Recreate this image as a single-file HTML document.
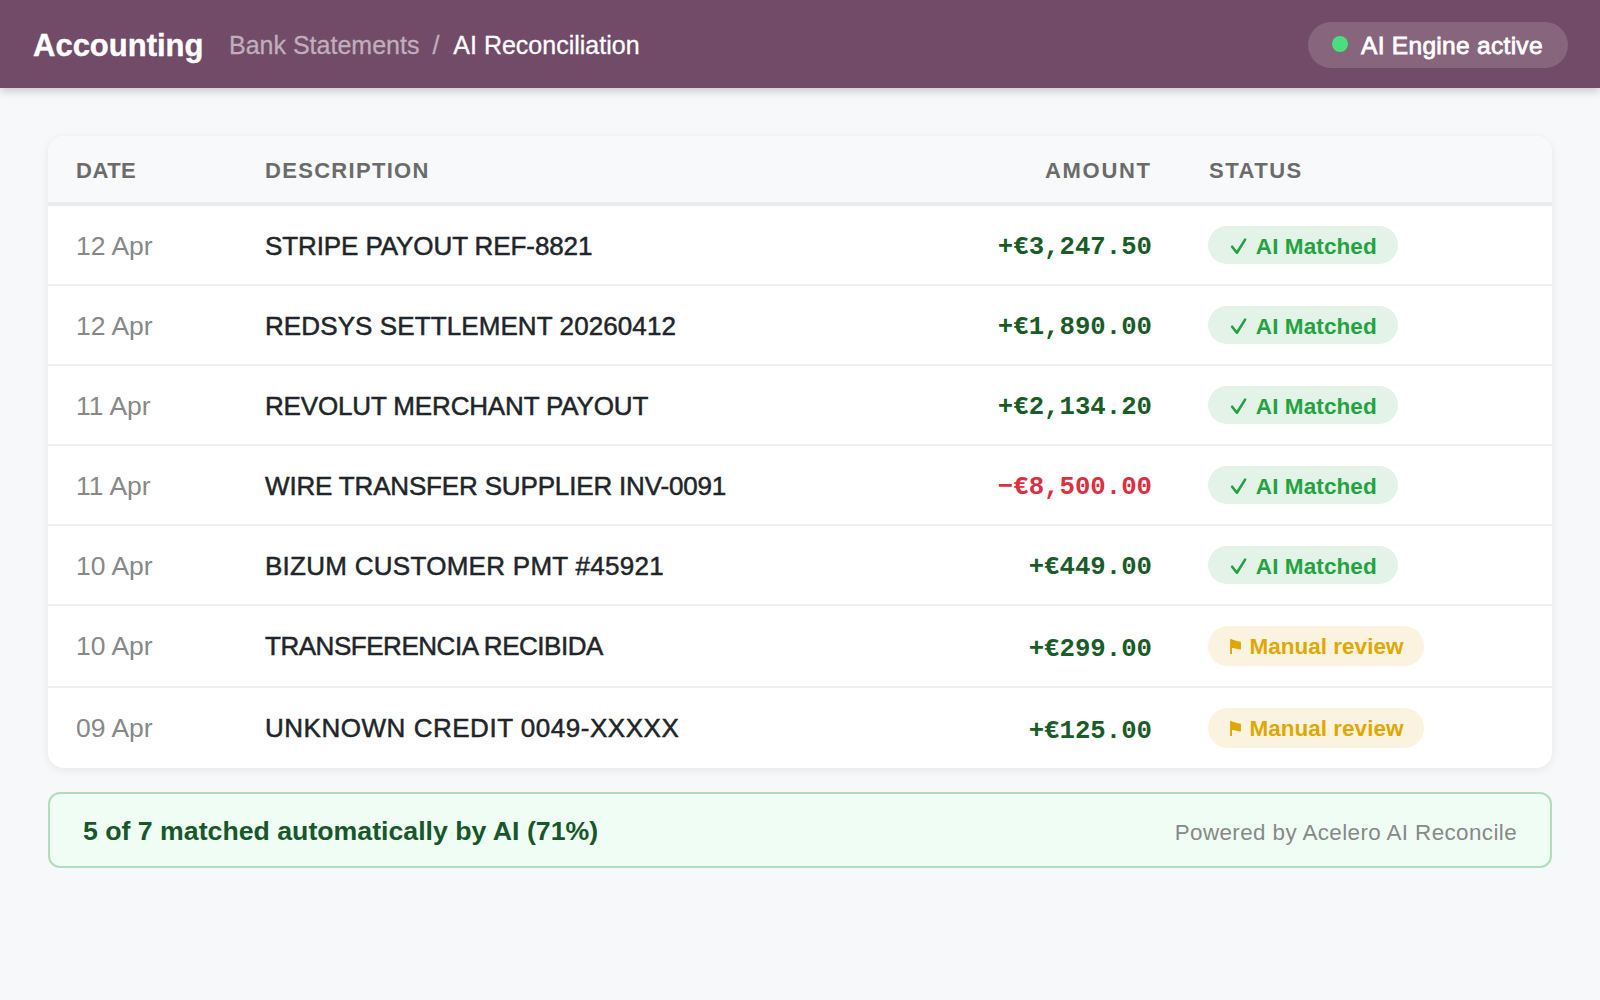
<!DOCTYPE html>
<html><head><meta charset="utf-8">
<style>
*{margin:0;padding:0;box-sizing:border-box}
html,body{width:1600px;height:1000px;overflow:hidden;background:#f7f8fa;font-family:"Liberation Sans",sans-serif}
.hdr{position:absolute;left:0;top:0;width:1600px;height:88px;background:#714b67;box-shadow:0 4px 8px rgba(0,0,0,.17)}
.brand{position:absolute;left:33px;top:28px;font-size:31px;line-height:36px;font-weight:bold;color:#fff;white-space:nowrap;-webkit-text-stroke:0.4px #fff}
.crumb{position:absolute;left:229px;top:30px;font-size:25px;line-height:30px;color:#c0aebb;white-space:nowrap;-webkit-text-stroke:0.3px currentColor}
.crumb .cur{color:#fff}
.crumb .sep{display:inline-block;margin:0 14px 0 13px}
.pill{position:absolute;left:1308px;top:22px;width:260px;height:46px;border-radius:23px;background:rgba(255,255,255,.15)}
.dot{position:absolute;left:24px;top:14px;width:16px;height:16px;border-radius:50%;background:#4ade80}
.pill span{position:absolute;left:53px;top:9px;font-size:24.5px;line-height:30px;letter-spacing:0.3px;-webkit-text-stroke:0.8px #fff;color:#fff;white-space:nowrap}
.card{position:absolute;left:48px;top:136px;width:1504px;height:632px;background:#fff;border-radius:16px;box-shadow:0 2px 10px rgba(0,0,0,.07)}
.th{position:absolute;left:48px;top:136px;width:1504px;height:70px;background:#f8f9fa;border-bottom:4px solid #e9ecef;border-radius:16px 16px 0 0}
.th div{position:absolute;top:22px;font-size:22px;line-height:26px;font-weight:bold;color:#6b6b6b;white-space:nowrap}
.row{position:absolute;left:48px;width:1504px;border-bottom:2px solid #efefef}
.row.last{border-bottom:none}
.d{position:absolute;left:76px;font-size:26.5px;line-height:32px;color:#888;white-space:nowrap}
.desc{position:absolute;left:265px;font-size:26px;line-height:32px;color:#212529;white-space:nowrap;-webkit-text-stroke:0.5px #212529}
.amt{position:absolute;right:448px;font-family:"Liberation Mono",monospace;font-weight:bold;font-size:25.7px;line-height:30px;color:#1a5c28;white-space:nowrap}
.amt.neg{color:#dc2f3f}
.badge{position:absolute;left:1208px;height:38px;border-radius:19px;white-space:nowrap}
.badge.ok{width:190px;background:#e3f3e7;color:#22a33f}
.badge.rev{width:216px;height:40px;border-radius:20px;background:#fbf3df;color:#dfa800}
.badge span{position:absolute;top:7px;font-size:22.5px;line-height:28px;font-weight:bold}
.badge .ic{position:absolute}
.foot{position:absolute;left:48px;top:792px;width:1504px;height:76px;border:2px solid #b0dcbf;border-radius:12px;background:#f0fdf4}
.foot .l{position:absolute;left:33px;top:22px;font-size:26.7px;line-height:30px;font-weight:bold;color:#17582a;white-space:nowrap}
.foot .r{position:absolute;right:33px;top:25px;letter-spacing:0.4px;font-size:22.4px;line-height:28px;color:#888;white-space:nowrap}
</style></head><body>
<div class="hdr">
  <div class="brand">Accounting</div>
  <div class="crumb">Bank Statements<span class="sep">/</span><span class="cur">AI Reconciliation</span></div>
  <div class="pill"><div class="dot"></div><span>AI Engine active</span></div>
</div>
<div class="card"></div>
<div class="th">
  <div style="left:28px;letter-spacing:0.5px">DATE</div>
  <div style="left:217px;letter-spacing:1.3px">DESCRIPTION</div>
  <div style="left:997px;letter-spacing:1.7px">AMOUNT</div>
  <div style="left:1161px;letter-spacing:1.5px">STATUS</div>
</div>
<div class="row" style="top:206px;height:80px"></div>
<div class="d" style="top:230px">12 Apr</div>
<div class="desc" style="top:230px;letter-spacing:-0.095px">STRIPE PAYOUT REF-8821</div>
<div class="amt pos" style="top:233px">+€3,247.50</div>
<div class="badge ok" style="top:226px"><svg class="ic" width="20" height="20" viewBox="0 0 20 20" style="left:20px;top:8px"><polyline points="4.1,12.7 8.9,18.7 17.1,5.6" fill="none" stroke="#22a33f" stroke-width="2.6" stroke-linecap="round" stroke-linejoin="round"/></svg><span style="left:47.8px;font-size:22.5px;letter-spacing:0.1px">AI Matched</span></div>
<div class="row" style="top:286px;height:80px"></div>
<div class="d" style="top:310px">12 Apr</div>
<div class="desc" style="top:310px;letter-spacing:0.098px">REDSYS SETTLEMENT 20260412</div>
<div class="amt pos" style="top:313px">+€1,890.00</div>
<div class="badge ok" style="top:306px"><svg class="ic" width="20" height="20" viewBox="0 0 20 20" style="left:20px;top:8px"><polyline points="4.1,12.7 8.9,18.7 17.1,5.6" fill="none" stroke="#22a33f" stroke-width="2.6" stroke-linecap="round" stroke-linejoin="round"/></svg><span style="left:47.8px;font-size:22.5px;letter-spacing:0.1px">AI Matched</span></div>
<div class="row" style="top:366px;height:80px"></div>
<div class="d" style="top:390px">11 Apr</div>
<div class="desc" style="top:390px;letter-spacing:-0.155px">REVOLUT MERCHANT PAYOUT</div>
<div class="amt pos" style="top:393px">+€2,134.20</div>
<div class="badge ok" style="top:386px"><svg class="ic" width="20" height="20" viewBox="0 0 20 20" style="left:20px;top:8px"><polyline points="4.1,12.7 8.9,18.7 17.1,5.6" fill="none" stroke="#22a33f" stroke-width="2.6" stroke-linecap="round" stroke-linejoin="round"/></svg><span style="left:47.8px;font-size:22.5px;letter-spacing:0.1px">AI Matched</span></div>
<div class="row" style="top:446px;height:80px"></div>
<div class="d" style="top:470px">11 Apr</div>
<div class="desc" style="top:470px;letter-spacing:-0.163px">WIRE TRANSFER SUPPLIER INV-0091</div>
<div class="amt neg" style="top:473px">−€8,500.00</div>
<div class="badge ok" style="top:466px"><svg class="ic" width="20" height="20" viewBox="0 0 20 20" style="left:20px;top:8px"><polyline points="4.1,12.7 8.9,18.7 17.1,5.6" fill="none" stroke="#22a33f" stroke-width="2.6" stroke-linecap="round" stroke-linejoin="round"/></svg><span style="left:47.8px;font-size:22.5px;letter-spacing:0.1px">AI Matched</span></div>
<div class="row" style="top:526px;height:80px"></div>
<div class="d" style="top:550px">10 Apr</div>
<div class="desc" style="top:550px;letter-spacing:0.275px">BIZUM CUSTOMER PMT #45921</div>
<div class="amt pos" style="top:553px">+€449.00</div>
<div class="badge ok" style="top:546px"><svg class="ic" width="20" height="20" viewBox="0 0 20 20" style="left:20px;top:8px"><polyline points="4.1,12.7 8.9,18.7 17.1,5.6" fill="none" stroke="#22a33f" stroke-width="2.6" stroke-linecap="round" stroke-linejoin="round"/></svg><span style="left:47.8px;font-size:22.5px;letter-spacing:0.1px">AI Matched</span></div>
<div class="row" style="top:606px;height:82px"></div>
<div class="d" style="top:630px">10 Apr</div>
<div class="desc" style="top:630px;letter-spacing:-0.467px">TRANSFERENCIA RECIBIDA</div>
<div class="amt pos" style="top:635px">+€299.00</div>
<div class="badge rev" style="top:626px"><svg class="ic" width="14" height="18" viewBox="0 0 14 18" style="left:22px;top:13px"><path d="M0.1,0.3 L2,0.3 L2,15 L0.1,15 Z" fill="#dfa800"/><path d="M0.5,0.2 C4,0.2 6.5,2.6 10.9,2.7 L10.9,10.5 C6.5,10.6 5,8.4 1.5,9.3 Z" fill="#dfa800"/></svg><span style="left:41.6px;font-size:22.5px">Manual review</span></div>
<div class="row last" style="top:688px;height:80px"></div>
<div class="d" style="top:712px">09 Apr</div>
<div class="desc" style="top:712px;letter-spacing:0.525px">UNKNOWN CREDIT 0049-XXXXX</div>
<div class="amt pos" style="top:717px">+€125.00</div>
<div class="badge rev" style="top:708px"><svg class="ic" width="14" height="18" viewBox="0 0 14 18" style="left:22px;top:13px"><path d="M0.1,0.3 L2,0.3 L2,15 L0.1,15 Z" fill="#dfa800"/><path d="M0.5,0.2 C4,0.2 6.5,2.6 10.9,2.7 L10.9,10.5 C6.5,10.6 5,8.4 1.5,9.3 Z" fill="#dfa800"/></svg><span style="left:41.6px;font-size:22.5px">Manual review</span></div>
<div class="foot">
  <div class="l">5 of 7 matched automatically by AI (71%)</div>
  <div class="r">Powered by Acelero AI Reconcile</div>
</div>
</body></html>
